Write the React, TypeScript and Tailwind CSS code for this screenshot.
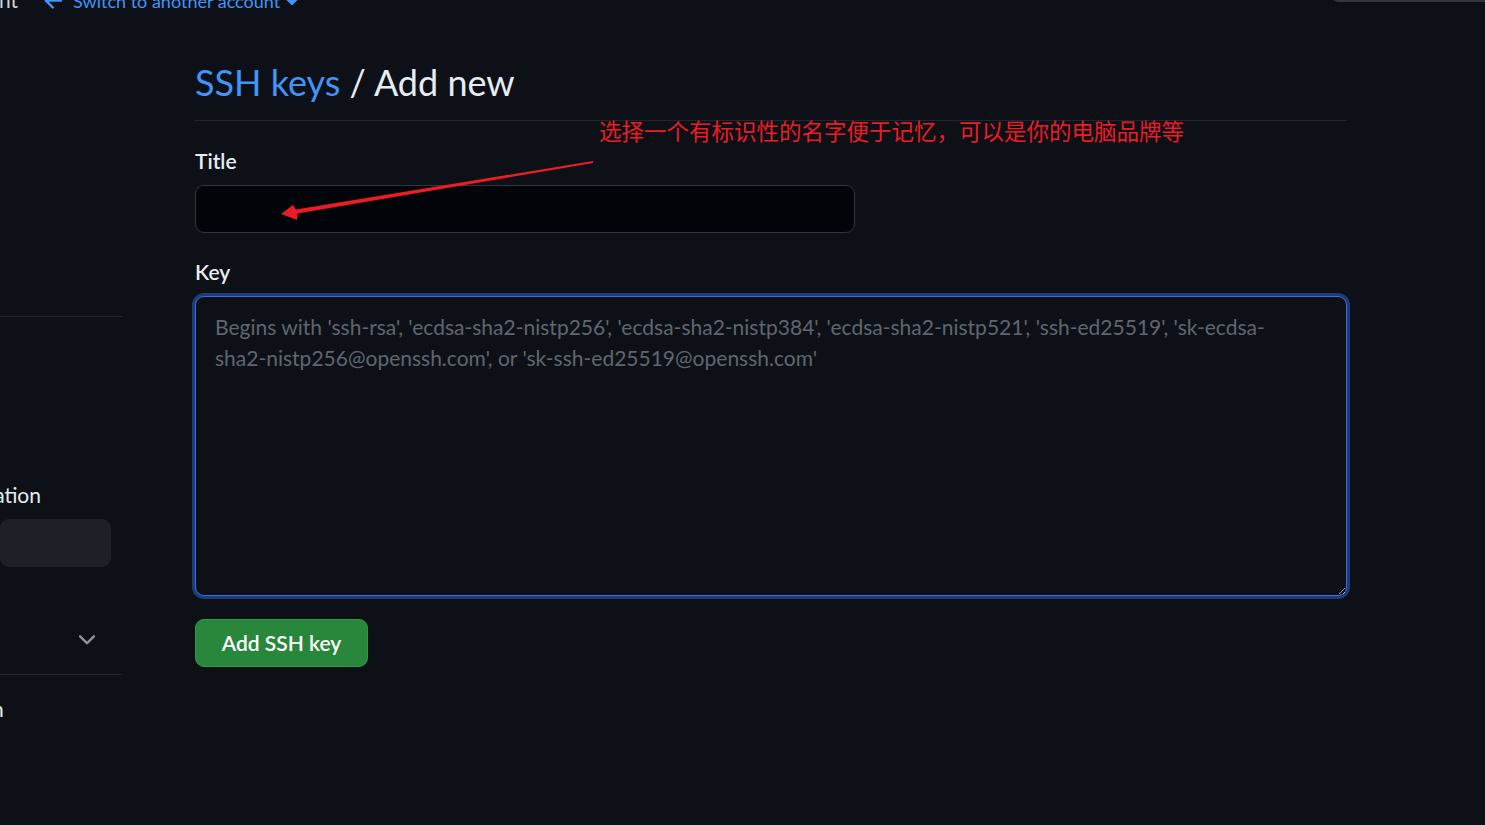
import { ChangeEvent, useState } from "react";

const font = { fontFamily: "Lato, 'Noto Sans', sans-serif" };

const PLACEHOLDER =
  "Begins with 'ssh-rsa', 'ecdsa-sha2-nistp256', 'ecdsa-sha2-nistp384', 'ecdsa-sha2-nistp521', 'ssh-ed25519', 'sk-ecdsa-\nsha2-nistp256@openssh.com', or 'sk-ssh-ed25519@openssh.com'";

function ArrowLeftIcon() {
  return (
    <svg viewBox="0 0 16 16" className="w-[26px] h-[26px] fill-current">
      <path d="M7.78 12.53a.75.75 0 0 1-1.06 0L2.47 8.28a.75.75 0 0 1 0-1.06l4.25-4.25a.751.751 0 0 1 1.042.018.751.751 0 0 1 .018 1.042L4.81 7h7.44a.75.75 0 0 1 0 1.5H4.81l2.970 2.97a.75.75 0 0 1 0 1.06Z" />
    </svg>
  );
}

function TriangleDownIcon() {
  return (
    <svg viewBox="0 0 16 16" className="w-[24px] h-[24px] fill-current">
      <path d="m4.427 7.427 3.396 3.396a.25.25 0 0 0 .354 0l3.396-3.396A.25.25 0 0 0 11.396 7H4.604a.25.25 0 0 0-.177.427Z" />
    </svg>
  );
}

function ChevronDownIcon() {
  return (
    <svg viewBox="0 0 16 16" className="w-[26px] h-[26px] fill-current">
      <path d="M12.78 5.22a.749.749 0 0 1 0 1.06l-4.25 4.25a.749.749 0 0 1-1.06 0L3.22 6.28a.749.749 0 1 1 1.06-1.06L8 8.939l3.72-3.719a.749.749 0 0 1 1.060 0Z" />
    </svg>
  );
}

/* red hand-drawn style arrow of the annotation, page coordinates */
function AnnotationArrow() {
  return (
    <svg
      className="absolute left-0 top-0 pointer-events-none"
      width={1485}
      height={825}
      viewBox="0 0 1485 825"
    >
      <polygon
        fill="#ec1c24"
        points="281,214 293,205 296,209.6 593,161 593.3,163 297.5,213.6 297,220"
      />
    </svg>
  );
}

export default function App() {
  const [title, setTitle] = useState("");
  const [key, setKey] = useState("");

  return (
    <div
      className="relative min-h-screen w-full overflow-hidden bg-[#0d1117] text-[#e6edf3]"
      style={font}
    >
      {/* top strip, scrolled partly out of view */}
      <div className="flex items-end -mt-[16px] h-[31px]">
        <span className="text-[21px] leading-[31px] text-[#c9d1d9] -ml-[1px]">nt</span>
        <a className="ml-[23px] flex items-center text-[18px] leading-[28px] text-[#4493f8]">
          <span className="mr-[6px] flex items-center">
            <ArrowLeftIcon />
          </span>
          Switch to another account
          <span className="flex items-center">
            <TriangleDownIcon />
          </span>
        </a>
        <div className="ml-auto mb-[13px] w-[153px] h-[20px] border-b-2 border-l border-[#30363d] rounded-bl-[6px]" />
      </div>

      <div className="flex">
        {/* sidebar, cut off at the left edge */}
        <aside className="w-[123px] shrink-0 pt-[301px]">
          <div className="border-t border-[#21262d]" />
          <div className="mt-[154px] flex flex-col pr-[12px]">
            <div className="h-[48px] flex items-center justify-end pr-[70px] text-[21px] text-[#e6edf3]">
              ation
            </div>
            <div className="h-[48px] rounded-[9px] bg-[#1d2127]" />
            <div className="mt-[49px] h-[48px] flex items-center justify-end pr-[11px] text-[#8b949e]">
              <ChevronDownIcon />
            </div>
          </div>
          <div className="mt-[10px] border-t border-[#21262d]" />
          <div className="mt-[18px] h-[31px] flex items-center -ml-[20px] text-[21px] text-[#e6edf3]">
            on
          </div>
        </aside>

        {/* main column */}
        <main className="ml-[72px] w-[1152px]">
          <h2 className="mt-[40px] pb-[11px] border-b border-[#21262d] text-[36px] leading-[54px] font-normal">
            <a className="text-[#4493f8]">SSH keys</a> / Add new
          </h2>

          <form className="flex flex-col">
            <label className="mt-[24px] text-[21px] leading-[31px] font-semibold">Title</label>
            <input
              value={title}
              onChange={(e: ChangeEvent<HTMLInputElement>) => setTitle(e.target.value)}
              className="mt-[9px] w-[660px] h-[48px] rounded-[9px] border border-[#30363d] bg-[#010409] px-[18px] text-[21px] outline-none"
            />

            <label className="mt-[23px] text-[21px] leading-[31px] font-semibold">Key</label>
            <textarea
              value={key}
              onChange={(e: ChangeEvent<HTMLTextAreaElement>) => setKey(e.target.value)}
              placeholder={PLACEHOLDER}
              className="mt-[9px] w-full h-[300px] rounded-[9px] border-[1.5px] border-[#3a6fdc] bg-[#0d1117] px-[19px] pt-[14px] text-[21px] leading-[31px] text-[#e6edf3] placeholder:text-[#5f666e] outline-none ring-[3px] ring-[#1d3a7c] [color-scheme:dark]"
            />

            <div className="mt-[23px]">
              <button
                type="button"
                className="h-[48px] w-[173px] rounded-[9px] border border-[#2f9a44] bg-[#29873b] text-[21px] font-semibold text-white"
              >
                Add SSH key
              </button>
            </div>
          </form>
        </main>
      </div>

      {/* annotation overlay */}
      <div
        className="absolute left-[599px] top-[119px] text-[22.5px] leading-none text-[#ec1c24] whitespace-nowrap"
        style={{ fontFamily: "'Noto Sans CJK SC', sans-serif" }}
      >
        选择一个有标识性的名字便于记忆，可以是你的电脑品牌等
      </div>
      <AnnotationArrow />
    </div>
  );
}
